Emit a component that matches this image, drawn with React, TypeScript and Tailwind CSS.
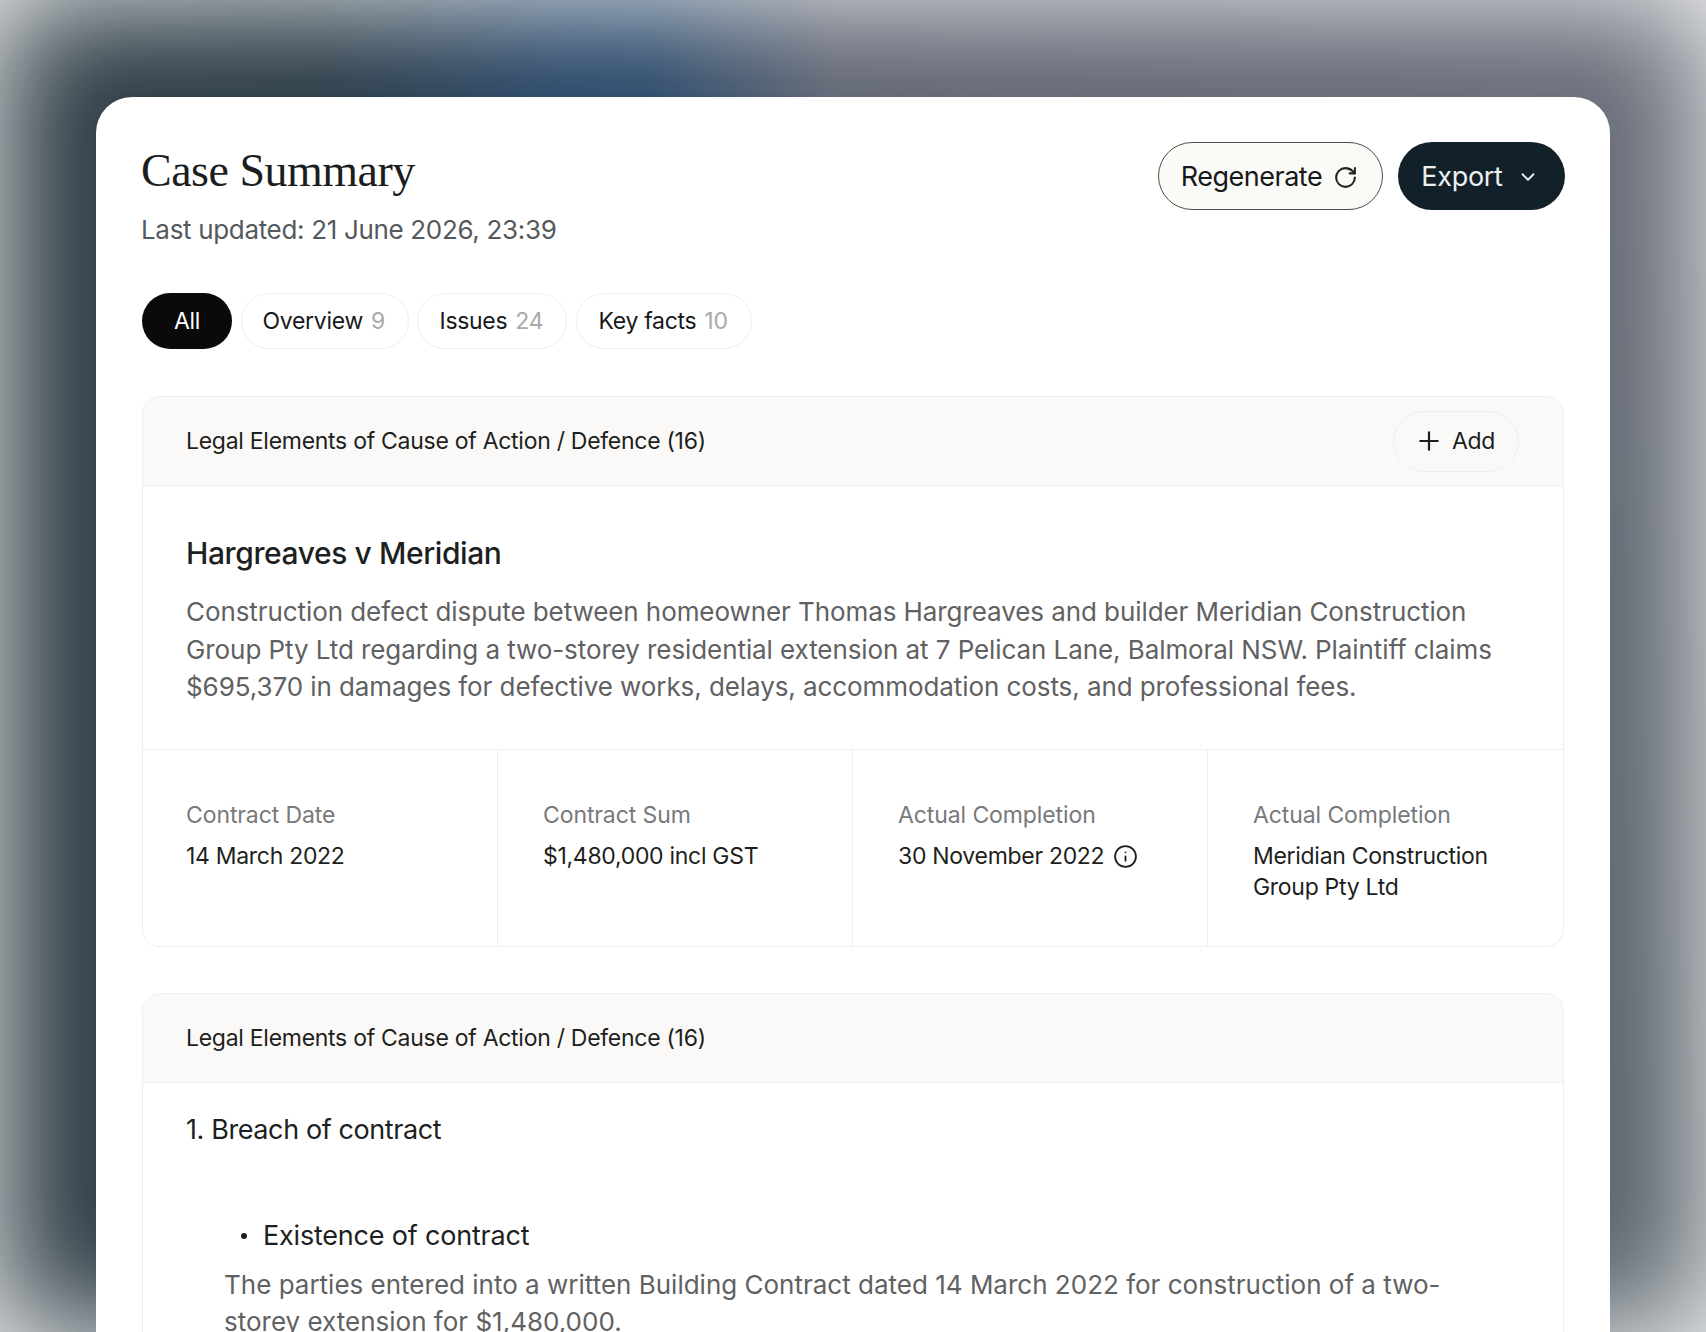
import { ChevronDown, Info, Plus, RotateCw } from "lucide-react";

const facts = [
  { label: "Contract Date", value: "14 March 2022" },
  { label: "Contract Sum", value: "$1,480,000 incl GST" },
  { label: "Actual Completion", value: "30 November 2022", info: true },
  { label: "Actual Completion", value: "Meridian Construction Group Pty Ltd" },
];

const tabs = [
  { label: "Overview", count: 9, width: "w-[168px]" },
  { label: "Issues", count: 24, width: "w-[150px]" },
  { label: "Key facts", count: 10, width: "w-[176px]" },
];

export default function App() {
  return (
    <div className="relative h-[1332px] overflow-hidden bg-[linear-gradient(90deg,#2f3c44_0%,#293a46_19%,#284668_33%,#2a4869_38%,#5f6472_49%,#666a77_90%,#666c76_100%)] px-[96px] pt-[97px] font-['Inter',sans-serif]">
      <div className="absolute inset-y-0 right-0 w-[96px] bg-[linear-gradient(180deg,transparent_15%,#5a646b_85%)]" />
      <div className="absolute inset-0 shadow-[inset_0_0_120px_rgba(255,255,255,0.95)]" />
      <div className="relative h-[1300px] rounded-t-[36px] bg-white px-[45px] pt-[44px]">
        <div className="flex items-start justify-between">
          <div>
            <h1 className="font-['Liberation_Serif',serif] text-[46px] leading-[60px] tracking-[-0.5px] text-[#1b1d1e]">Case Summary</h1>
            <p className="mt-[13px] text-[26px] leading-[32px] tracking-[-0.33px] text-[#55595b]">Last updated: 21 June 2026, 23:39</p>
          </div>
          <div className="flex gap-[15px] pt-[1px]">
            <button className="flex h-[68px] w-[225px] items-center justify-center gap-[11px] rounded-full border border-[#4f4f4a] bg-[#fafaf7] pr-[2px] pt-[2px] text-[27px] tracking-[-0.5px] text-[#17191a]">
              Regenerate <RotateCw size={25} strokeWidth={2} className="text-[#222]" />
            </button>
            <button className="flex h-[68px] w-[167px] items-center justify-center gap-[14px] rounded-full bg-[#12202a] pr-[3px] pt-[2px] text-[27px] tracking-[-0.3px] text-[#eef0f1]">
              Export <ChevronDown size={22} strokeWidth={2} />
            </button>
          </div>
        </div>

        <div className="ml-[1px] mt-[47px] flex gap-[8.7px]">
          <div className="flex h-[56px] w-[90px] items-center justify-center rounded-full bg-[#0a0a0a] text-[23px] tracking-[-0.3px] text-white">All</div>
          {tabs.map((t) => (
            <div key={t.label} className={`flex h-[56px] ${t.width} items-center justify-center gap-[8px] rounded-full border border-[#eeeeea] pr-[2px] text-[23px] tracking-[-0.3px] text-[#17191a]`}>
              {t.label} <span className="text-[#a9a9a6]">{t.count}</span>
            </div>
          ))}
        </div>

        <div className="mx-[1px] mt-[47px] overflow-hidden rounded-[18px] border border-[#eeeeeb]">
          <div className="flex h-[89px] items-center justify-between border-b border-[#eeeeeb] bg-[#faf9f7] pl-[43px] pr-[44px]">
            <span className="text-[23px] tracking-[-0.28px] text-[#1d1f20]">Legal Elements of Cause of Action / Defence (16)</span>
            <button className="flex h-[61px] w-[126px] items-center justify-center gap-[8px] rounded-full border border-[#eeeeea] pr-[3px] text-[23px] tracking-[-0.3px] text-[#1b1d1e]">
              <Plus size={30} strokeWidth={1.75} /> Add
            </button>
          </div>
          <div className="px-[43px] pb-[43px] pt-[47px]">
            <h2 className="text-[30px] leading-[40px] font-medium tracking-[-0.4px] text-[#1d1f20]">Hargreaves v Meridian</h2>
            <p className="mt-[20px] text-[26px] leading-[37.7px] tracking-[-0.08px] text-[#5f6162]">
              Construction defect dispute between homeowner Thomas Hargreaves and builder Meridian Construction Group Pty Ltd regarding a two-storey residential extension at 7 Pelican Lane, Balmoral NSW. Plaintiff claims $695,370 in damages for defective works, delays, accommodation costs, and professional fees.
            </p>
          </div>
          <div className="grid h-[197px] grid-cols-4 divide-x divide-[#eeeeeb] border-t border-[#eeeeeb]">
            {facts.map((f, i) => (
              <div key={i} className="px-[45px] pt-[50px] first:pl-[43px]">
                <div className="text-[23px] leading-[30px] tracking-[-0.1px] text-[#77797a]">{f.label}</div>
                <div className="mt-[11px] flex items-center gap-[9px] text-[23px] leading-[30.5px] tracking-[-0.3px] text-[#1d1f20]">
                  <span>{f.value}</span>
                  {f.info && <Info size={25} strokeWidth={1.75} className="shrink-0" />}
                </div>
              </div>
            ))}
          </div>
        </div>

        <div className="mx-[1px] mt-[46px] rounded-t-[18px] border border-[#eeeeeb]">
          <div className="flex h-[89px] items-center rounded-t-[18px] border-b border-[#eeeeeb] bg-[#faf9f7] pl-[43px]">
            <span className="text-[23px] tracking-[-0.28px] text-[#1d1f20]">Legal Elements of Cause of Action / Defence (16)</span>
          </div>
          <div className="px-[43px] pb-[80px] pt-[28px]">
            <h3 className="text-[27px] leading-[38px] tracking-[-0.4px] text-[#1d1f20]">1. Breach of contract</h3>
            <div className="mt-[68px] flex items-center pl-[55px] text-[27px] leading-[38px] tracking-[-0.2px] text-[#1d1f20]">
              <span className="mr-[16px] h-[6px] w-[6px] rounded-full bg-[#1d1f20]" />
              Existence of contract
            </div>
            <p className="mt-[11px] pl-[38px] pr-[40px] text-[26px] leading-[37.2px] text-[#5f6162]">
              The parties entered into a written Building Contract dated 14 March 2022 for construction of a two-storey extension for $1,480,000.
            </p>
          </div>
        </div>
      </div>
    </div>
  );
}
